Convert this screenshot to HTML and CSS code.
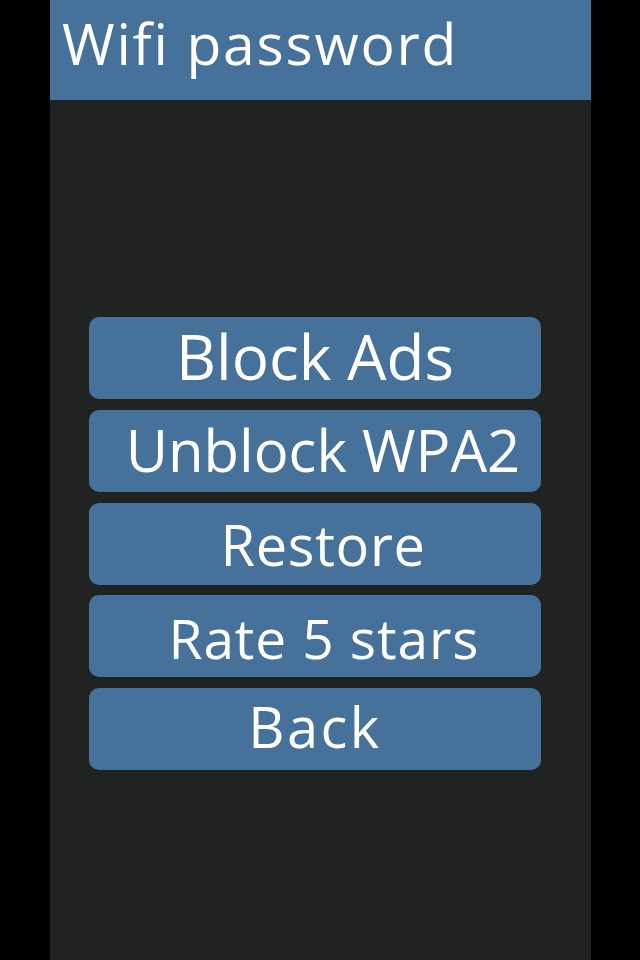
FILE: index.html
```html
<!DOCTYPE html>
<html>
<head>
<meta charset="utf-8">
<link rel="stylesheet" href="styles.css">
</head>
<body>
<div class="screen">
  <header class="title-bar"><h1 class="title">Wifi password</h1></header>
  <main class="menu">
    <button class="menu-btn btn-block">Block Ads</button>
    <button class="menu-btn btn-unblock">Unblock WPA2</button>
    <button class="menu-btn btn-restore">Restore</button>
    <button class="menu-btn btn-rate">Rate 5 stars</button>
    <button class="menu-btn btn-back">Back</button>
  </main>
</div>
</body>
</html>
```
FILE: styles.css
```css
html, body {
  margin: 0;
  padding: 0;
  background: #000;
  height: 100%;
}
.screen {
  width: 541px;
  margin-left: 50px;
  height: 960px;
  background: #212322;
  display: flex;
  flex-direction: column;
  font-family: "Open Sans", "DejaVu Sans", sans-serif;
  color: #fff;
}
.title-bar {
  height: 100px;
  flex: none;
  background: #46719a;
  box-sizing: border-box;
  padding-left: 12px;
}
.title {
  margin: 0;
  font-weight: 400;
  font-size: 57px;
  line-height: 86px;
  letter-spacing: 1.8px;
}
.menu {
  display: flex;
  flex-direction: column;
  gap: 10.75px;
  padding: 217px 50px 0 39px;
}
.menu-btn {
  height: 82px;
  box-sizing: border-box;
  border: none;
  border-radius: 10px;
  background: #46719a;
  color: #fff;
  font-family: "Open Sans", "DejaVu Sans", sans-serif;
  line-height: 70px;
  padding: 0;
  text-align: center;
}
.btn-block {
  font-size: 62px;
  padding-bottom: 5px;
}
.btn-unblock {
  font-size: 58px;
  padding-left: 16px;
  padding-bottom: 1px;
}
.btn-restore {
  font-size: 56px;
  letter-spacing: 0.6px;
  padding-left: 16px;
}
.btn-rate {
  font-size: 55px;
  letter-spacing: 0.9px;
  padding-left: 18px;
  padding-top: 3px;
}
.btn-back {
  font-size: 56px;
  letter-spacing: 2.5px;
  padding-bottom: 7px;
}
```
